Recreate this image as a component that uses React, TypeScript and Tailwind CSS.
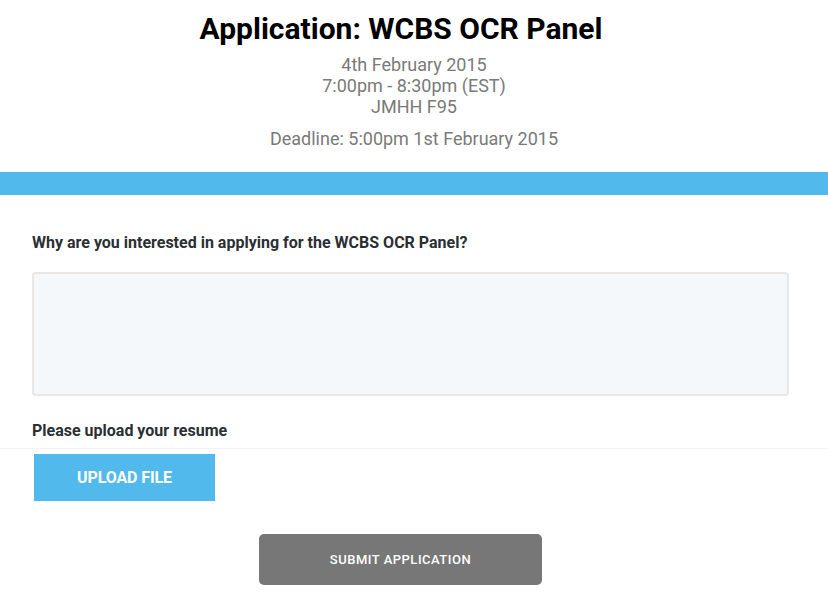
import React from "react";

export default function App() {
  return (
    <div className="w-[828px] h-[604px] bg-white overflow-hidden" style={{ fontFamily: "Roboto, 'Liberation Sans', sans-serif" }}>
      <div className="flex flex-col items-center pt-[11px]">
        <h1 className="text-[30px] leading-[36px] font-bold text-black pr-[26px]">Application: WCBS OCR Panel</h1>
        <div className="mt-[7px] flex flex-col items-center text-[18px] leading-[21px] text-[#7a7a7a]">
          <div>4th February 2015</div>
          <div>7:00pm - 8:30pm (EST)</div>
          <div>JMHH F95</div>
          <div className="mt-[11px]">Deadline: 5:00pm 1st February 2015</div>
        </div>
      </div>
      <div className="mt-[23px] h-[23px] bg-[#52b9ec]" />
      <div className="pt-[38px] px-[32px]">
        <div className="text-[16px] leading-[19px] font-bold text-[#2b2f33]">Why are you interested in applying for the WCBS OCR Panel?</div>
        <textarea className="mt-[20px] block w-[757px] h-[124px] resize-none rounded-[4px] border-2 border-[#e8e8e8] bg-[#f5f8fa] outline-none" />
        <div className="mt-[25px] text-[16px] leading-[19px] font-bold text-[#2b2f33]">Please upload your resume</div>
      </div>
      <div className="mt-[8px] h-px bg-[#f3f3f3]" />
      <div className="px-[34px] pt-[5px]">
        <button className="w-[181px] h-[47px] bg-[#52b9ec] text-white font-bold text-[16px] tracking-[-0.1px]">UPLOAD FILE</button>
      </div>
      <div className="flex justify-center pt-[33px] pr-[27px]">
        <button className="w-[283px] h-[51px] rounded-[5px] bg-[#777777] text-white text-[13px] font-medium tracking-[0.5px]">SUBMIT APPLICATION</button>
      </div>
    </div>
  );
}
